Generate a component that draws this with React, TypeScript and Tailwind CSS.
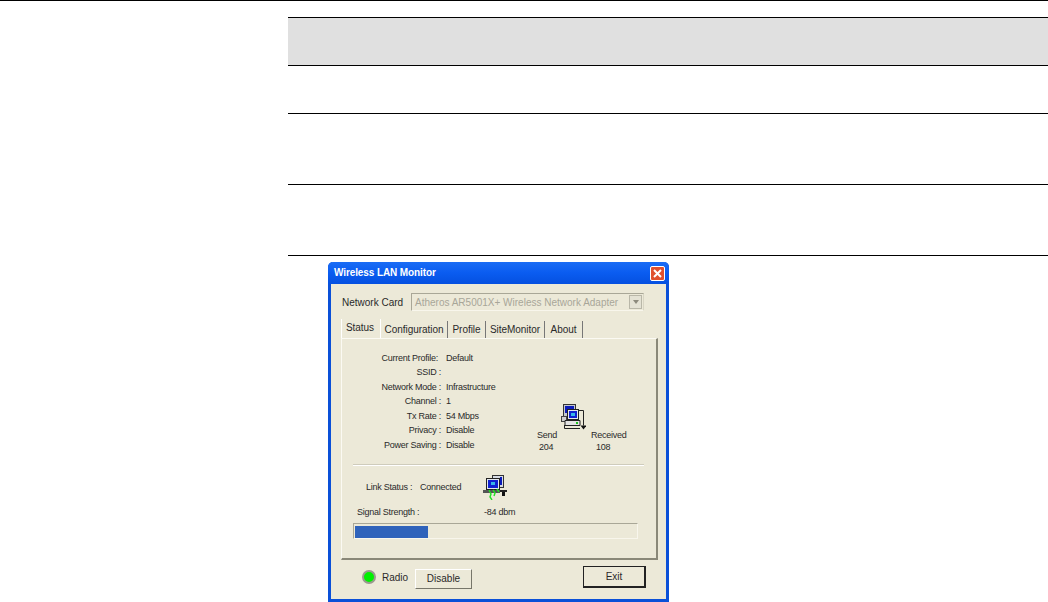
const rows = [
  ["Current Profile:", "Default"],
  ["SSID :", ""],
  ["Network Mode :", "Infrastructure"],
  ["Channel :", "1"],
  ["Tx Rate :", "54 Mbps"],
  ["Privacy :", "Disable"],
  ["Power Saving :", "Disable"],
];

const tabs = [
  { label: "Status", width: "w-[40px]" },
  { label: "Configuration", width: "w-[67px]" },
  { label: "Profile", width: "w-[38px]" },
  { label: "SiteMonitor", width: "w-[59px]" },
  { label: "About", width: "w-[38px]" },
];

function ComputersIcon() {
  return (
    <svg width="25" height="26" viewBox="0 0 25 26">
      {/* back computer */}
      <rect x="2.5" y="0.5" width="12" height="14" fill="#c4c8d0" stroke="#333" />
      <rect x="4" y="2" width="9" height="7" fill="#0a1ab8" />
      {/* front computer */}
      <rect x="6.5" y="5.5" width="11" height="10" fill="#e4e8ee" stroke="#222" />
      <rect x="8" y="7" width="8" height="7" fill="#1020d0" />
      <rect x="10" y="9" width="4" height="3" fill="#37b6e8" />
      <rect x="0.5" y="12.5" width="5" height="5" fill="#d0d0d0" stroke="#444" />
      <path d="M4 16.5h15v5H4z" fill="#e4e4e4" stroke="#222" />
      <rect x="15" y="18" width="2" height="2" fill="#20c020" />
      <path d="M18 6.5h4.5v15M3.5 21v3.5h15.5" fill="none" stroke="#222" />
      <path d="M19.5 21.5h6l-3 4z" fill="#111" />
    </svg>
  );
}

function LinkIcon() {
  return (
    <svg width="24" height="25" viewBox="0 0 24 25">
      <rect x="9.5" y="0.5" width="11" height="12" fill="#d8dce4" stroke="#333" />
      <rect x="17" y="2" width="2" height="8" fill="#0a1ab8" />
      <rect x="3.5" y="3.5" width="13" height="11" fill="#e4e8ee" stroke="#222" />
      <rect x="5" y="5" width="10" height="8" fill="#1020d0" />
      <rect x="8" y="7" width="4" height="3" fill="#37b6e8" />
      <rect x="0" y="15" width="17" height="3" fill="#555" />
      <rect x="17" y="15" width="7" height="2" fill="#222" />
      <rect x="19" y="17" width="3" height="4" fill="#111" />
      <path d="M6 15l2 4-1 3 2 3M10 15l2 3-1 3M14 14l2 3" fill="none" stroke="#22e022" strokeWidth="1.4" />
    </svg>
  );
}

export default function App() {
  return (
    <div className="w-[1048px] h-[602px] bg-white overflow-hidden font-['Liberation_Sans',sans-serif]">
      <div className="h-px bg-black" />

      {/* empty table */}
      <div className="ml-[288px] mt-4">
        <div className="h-[49px] bg-[#e0e0e0] border-y border-black" />
        <div className="h-[48px] border-b border-black" />
        <div className="h-[71px] border-b border-black" />
        <div className="h-[71px] border-b border-black" />
      </div>

      {/* dialog */}
      <div className="ml-[328px] mt-[6px] w-[341px] h-[340px] flex flex-col bg-[#ece9d8] border-x-[3px] border-b-[3px] border-[#0a50d8] rounded-t-[5px] text-[9px] tracking-[-0.25px] text-[#2a2a2a]">
        <div className="-mx-[3px] h-[22px] shrink-0 flex items-center justify-between pl-[6px] pr-[4px] rounded-t-[5px] bg-gradient-to-b from-[#1a6cf5] via-[#0a5cf0] to-[#0550e0]">
          <span className="text-white font-bold text-[10px] tracking-[-0.1px] leading-none">Wireless LAN Monitor</span>
          <div className="w-[15px] h-[15px] rounded-[2px] border border-white bg-[#e0502e] flex items-center justify-center">
            <svg width="9" height="9" viewBox="0 0 9 9">
              <path d="M1 1l7 7M8 1l-7 7" stroke="white" strokeWidth="2" />
            </svg>
          </div>
        </div>

        <div className="flex-1 flex flex-col pl-[10px] pr-[9px]">
          {/* network card */}
          <div className="mt-[9px] h-[18px] flex items-center">
            <span className="w-[69px] text-[10px] tracking-normal ml-[1px]">Network Card</span>
            <div className="w-[233px] h-[18px] flex items-center justify-between border border-[#a9a797] border-r-[#d8d5c4] border-b-[#f8f6ec] pl-[3px] pr-[1px] text-[#a8a698] text-[10px] tracking-normal">
              <span>Atheros AR5001X+ Wireless Network Adapter</span>
              <div className="w-[13px] h-[14px] bg-[#e4e2d4] border border-[#b9b7a8] flex items-center justify-center">
                <div className="border-x-[3px] border-x-transparent border-t-[4px] border-t-[#8c8a7c]" />
              </div>
            </div>
          </div>

          {/* tabs */}
          <div className="mt-[8px] h-[19px] flex items-end text-[10px] tracking-[-0.05px]">
            {tabs.map((t, i) => (
              <div
                key={t.label}
                className={`${t.width} ${i === 0 ? "h-[19px] border-l border-white pb-[2px] pr-[2px]" : "h-[17px]"} flex items-center justify-center border-r border-[#777]`}
              >
                {t.label}
              </div>
            ))}
          </div>

          {/* status panel */}
          <div className="w-[317px] h-[222px] flex flex-col border-t border-l border-[#fbfaf3] border-r-2 border-b-2 border-r-[#8a8878] border-b-[#8a8878]">
            <div className="h-[125px] flex pt-[12px]">
              <div className="w-[200px] flex flex-col">
                {rows.map(([label, value], i) => (
                  <div key={label} className="h-[14.5px] flex items-center">
                    <span className={`w-[99px] text-right ${i === 0 ? "pr-[3px]" : ""}`}>{label}</span>
                    <span className="ml-[5px]">{value}</span>
                  </div>
                ))}
              </div>
              <div className="relative flex-1">
                <div className="absolute left-[19px] top-[53px]">
                  <ComputersIcon />
                </div>
                <div className="absolute left-[-5px] top-[78px]">Send</div>
                <div className="absolute left-[49px] top-[78px]">Received</div>
                <div className="absolute left-[-3px] top-[90px]">204</div>
                <div className="absolute left-[54px] top-[90px]">108</div>
              </div>
            </div>

            <div className="ml-[11px] w-[291px] h-[2px] bg-[#cfccbc] border-b border-white" />

            <div className="h-[33px] flex items-center mt-[5px] ml-[24px]">
              <span className="w-[54px]">Link Status :</span>
              <span className="w-[63px]">Connected</span>
              <LinkIcon />
            </div>

            <div className="h-[13px] mt-[2px] flex items-center ml-[15px]">
              <span className="w-[127px]">Signal Strength :</span>
              <span>-84 dbm</span>
            </div>

            <div className="ml-[11px] mt-[4px] w-[285px] h-[16px] p-[1px] border border-[#a9a797] border-r-[#f8f6ec] border-b-[#f8f6ec]">
              <div className="w-[73px] h-[12px] mt-[1px] bg-[#2f63bb]" />
            </div>
          </div>

          {/* bottom bar */}
          <div className="mt-[5px] h-[24px] flex items-center">
            <div className="ml-[21px] w-[14px] h-[14px] rounded-full bg-[#00f000] border-2 border-[#9a9a8e]" />
            <span className="ml-[6px] w-[33px] text-[10px] tracking-normal">Radio</span>
            <div className="w-[57px] h-[20px] mt-[3px] flex items-center justify-center text-[10px] tracking-normal border border-t-white border-l-white border-r-[#77766a] border-b-[#77766a]">
              Disable
            </div>
            <div className="ml-[111px] w-[63px] h-[22px] flex items-center justify-center text-[10px] tracking-normal border border-[#222] border-r-2 border-b-2">
              Exit
            </div>
          </div>
        </div>
      </div>
    </div>
  );
}
